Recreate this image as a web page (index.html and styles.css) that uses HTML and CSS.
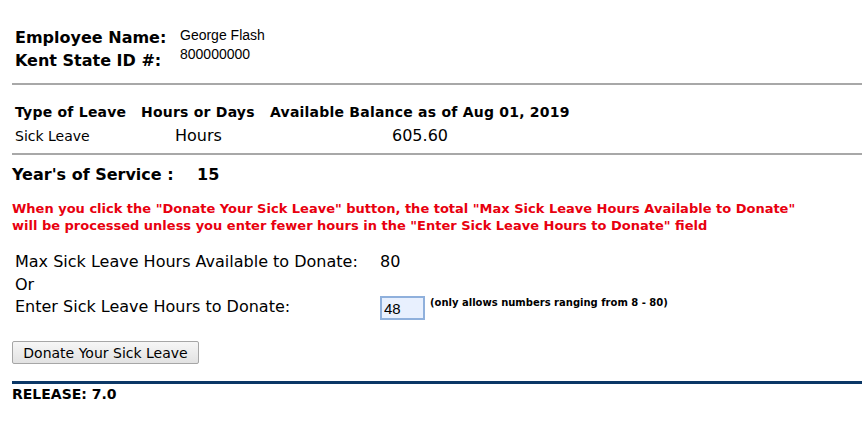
FILE: index.html
```html
<!DOCTYPE html>
<html>
<head>
<meta charset="utf-8">
<link rel="stylesheet" href="styles.css">
</head>
<body>
<div class="page">
  <div class="employee">
    <div class="labels">
      <div>Employee Name:</div>
      <div>Kent State ID #:</div>
    </div>
    <div class="values">
      <div>George Flash</div>
      <div>800000000</div>
    </div>
  </div>
  <hr class="rule rule-top">
  <div class="leave">
    <div class="th">Type of Leave</div>
    <div class="th">Hours or Days</div>
    <div class="th">Available Balance as of Aug 01, 2019</div>
    <div class="td td-type">Sick Leave</div>
    <div class="td td-hours">Hours</div>
    <div class="td td-center">605.60</div>
  </div>
  <hr class="rule rule-mid">
  <div class="service"><span class="service-label">Year's of Service :</span><span class="service-value">15</span></div>
  <p class="warning">When you click the "Donate Your Sick Leave" button, the total "Max Sick Leave Hours Available to Donate"<br>will be processed unless you enter fewer hours in the "Enter Sick Leave Hours to Donate" field</p>
  <div class="donate">
    <div class="d-label">Max Sick Leave Hours Available to Donate:</div>
    <div class="d-value">80</div>
    <div class="d-label d-or">Or</div>
    <div></div>
    <div class="d-label">Enter Sick Leave Hours to Donate:</div>
    <div class="d-input-cell"><input class="hours-input" type="text" value="48"><span class="hint">(only allows numbers ranging from 8 - 80)</span></div>
  </div>
  <button class="donate-btn" type="button">Donate Your Sick Leave</button>
  <div class="footer-bar"></div>
  <div class="release">RELEASE: 7.0</div>
</div>
</body>
</html>
```
FILE: styles.css
```css
html, body {
  margin: 0;
  padding: 0;
  background: #fff;
}
body {
  font-family: "DejaVu Sans", Verdana, sans-serif;
  color: #000;
}
.page {
  padding: 0 0 0 12px;
}
.employee {
  display: flex;
  padding: 26px 0 0 3px;
}
.labels {
  width: 165px;
  font-weight: bold;
  font-size: 16px;
  line-height: 23px;
}
.values {
  font-family: "Liberation Sans", Arial, sans-serif;
  font-size: 14px;
  line-height: 19px;
}
.rule {
  border: 0;
  height: 2px;
  background: #a8a8a8;
  margin: 0;
}
.rule-top {
  margin-top: 11px;
}
.leave {
  display: grid;
  grid-template-columns: 126px 129px 300px;
  padding: 18px 0 0 3px;
}
.th {
  font-weight: bold;
  font-size: 14px;
  letter-spacing: 0.22px;
  line-height: 18px;
}
.td {
  font-size: 16px;
  line-height: 26px;
  padding-top: 2px;
}
.td-type {
  font-size: 14px;
}
.td-hours {
  padding-left: 34px;
}
.td-center {
  text-align: center;
}
.rule-mid {
  margin-top: 4px;
}
.service {
  font-weight: bold;
  font-size: 16px;
  line-height: 20px;
  margin-top: 10px;
}
.service-label {
  display: inline-block;
  width: 185px;
}
.warning {
  color: #e8000f;
  font-weight: bold;
  font-size: 13px;
  line-height: 16.5px;
  margin: 16px 0 0 0;
}
.donate {
  display: grid;
  grid-template-columns: 365px auto;
  padding: 17px 0 0 3px;
  font-size: 16px;
  line-height: 22.5px;
  align-items: start;
}
.d-input-cell {
  display: flex;
  align-items: flex-start;
  gap: 5px;
}
.hours-input {
  width: 45px;
  height: 24px;
  box-sizing: border-box;
  margin: 0;
  padding: 0 2px;
  border: 2px solid #8fb0dc;
  background: #e8f0fe;
  font-family: "Liberation Sans", Arial, sans-serif;
  font-size: 15px;
  color: #000;
}
.hint {
  font-size: 10px;
  font-weight: bold;
  line-height: 12px;
  margin-top: 1px;
}
.donate-btn {
  display: block;
  margin: 21px 0 0 0;
  width: 187px;
  height: 23px;
  padding: 0;
  font-family: "DejaVu Sans", Verdana, sans-serif;
  font-size: 14px;
  color: #000;
  background: linear-gradient(#f6f6f6, #e2e2e2);
  border: 1px solid #a6a6a6;
  border-radius: 2px;
}
.footer-bar {
  height: 3px;
  background: #0b3766;
  margin-top: 17px;
}
.release {
  font-weight: bold;
  font-size: 14px;
  line-height: 16px;
  margin-top: 2px;
}
```
